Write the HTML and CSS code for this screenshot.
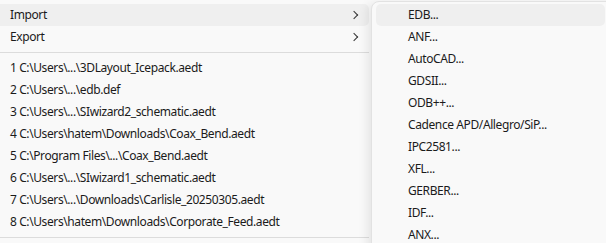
FILE: index.html
```html
<html>
<head>
<title>file menu</title>
<meta name="viewport" content="width=device-width, initial-scale=1"/>
<link rel="stylesheet" href="styles.css">
</head>
<body>

<div class="menu">
  <div class="item active"><span>Import</span><span class="chev"></span></div>
  <div class="item"><span>Export</span><span class="chev"></span></div>
  <div class="sep"></div>
  <div class="item">1 C:\Users\...\3DLayout_Icepack.aedt</div>
  <div class="item">2 C:\Users\...\edb.def</div>
  <div class="item">3 C:\Users\...\SIwizard2_schematic.aedt</div>
  <div class="item">4 C:\Users\hatem\Downloads\Coax_Bend.aedt</div>
  <div class="item">5 C:\Program Files\...\Coax_Bend.aedt</div>
  <div class="item">6 C:\Users\...\SIwizard1_schematic.aedt</div>
  <div class="item">7 C:\Users\...\Downloads\Carlisle_20250305.aedt</div>
  <div class="item">8 C:\Users\hatem\Downloads\Corporate_Feed.aedt</div>
  <div class="sep"></div>
</div>

<div class="submenu">
  <div class="item active">EDB...</div>
  <div class="item">ANF...</div>
  <div class="item">AutoCAD...</div>
  <div class="item">GDSII...</div>
  <div class="item">ODB++...</div>
  <div class="item">Cadence APD/Allegro/SiP...</div>
  <div class="item">IPC2581...</div>
  <div class="item">XFL...</div>
  <div class="item">GERBER...</div>
  <div class="item">IDF...</div>
  <div class="item">ANX...</div>
</div>

</body>
</html>
```

FILE: styles.css
```css
html, body {margin:0; padding:0; height:100%; width:100%; overflow:hidden;}
body {
 background: #f9f9f9;
 color: #1b1b1b;
 font: normal 12px/22px "Noto Sans", "Open Sans", sans-serif;
 letter-spacing: -0.4px;
}

.menu {
 width: 369px;
 padding-top: 4px;
}
.menu .item {
 display: flex;
 justify-content: space-between;
 align-items: center;
 height: 22px;
 padding: 0 10px;
 border-radius: 0 5px 5px 0;
 white-space: nowrap;
}
.menu .item.active {background: #efefef;}

.chev {
 width: 5px;
 height: 5px;
 margin-right: 2px;
 border-top: 1.3px solid #333;
 border-right: 1.3px solid #333;
 transform: rotate(45deg);
}

.sep {
 height: 1px;
 background: #dcdcdc;
 margin: 4px 0;
}

/* flyout over the main menu */
.submenu {
 position: absolute;
 left: 371px;
 top: 1px;
 width: 300px;
 height: 300px;
 padding: 2px 0 0 4px;
 background: #f9f9f9;
 border: 1px solid #e2e2e2;
 border-radius: 8px 0 0 0;
 box-shadow: -4px 2px 10px rgba(0,0,0,0.08);
}
.submenu .item {
 height: 22px;
 padding-left: 32px;
 border-radius: 5px;
 width: 197px;
}
.submenu .item.active {background: #efefef;}
```
